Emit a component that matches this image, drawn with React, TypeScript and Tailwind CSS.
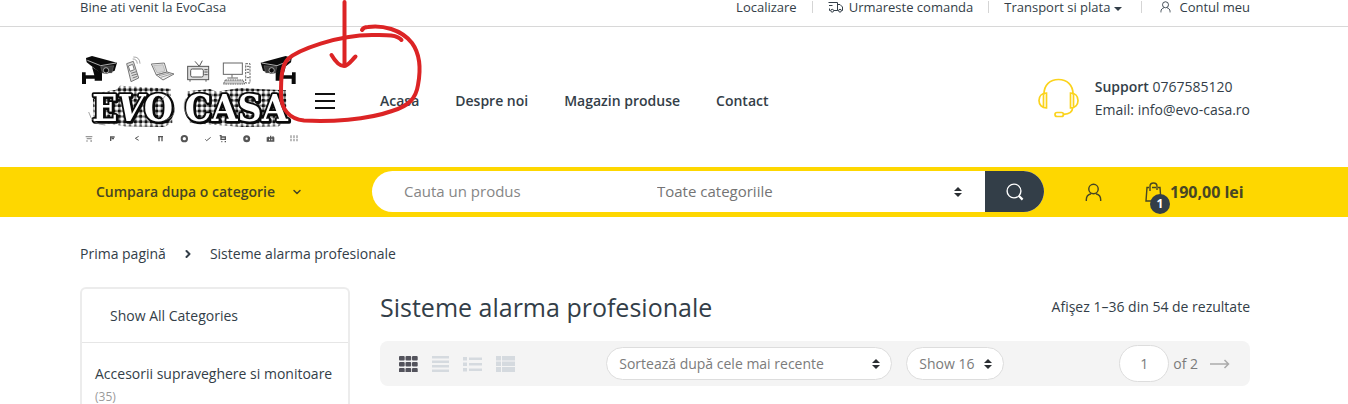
import type { ReactNode } from 'react'
import { ChevronDown, ChevronRight } from 'lucide-react'

type IconProps = {
  className?: string;
};

type PillSelectProps = {
  label: string;
  value: string;
  className: string;
};

const navLinks = ['Acasa', 'Despre noi', 'Magazin produse', 'Contact']

function Container({ children }: { children: ReactNode }) {
  return (
    <div className="pr-[18px]">
      <div className="mx-auto w-full max-w-[1170px]">{children}</div>
    </div>
  )
}

function UserIcon({ className }: IconProps) {
  return (
    <svg viewBox="0 0 18 20" fill="none" stroke="currentColor" strokeWidth="1.500" className={className} aria-hidden="true">
      <circle cx="9" cy="6.300" r="5" />
      <path d="M1.400 19v-1.500c0-3.500 2.300-5.500 5-6.200M16.600 19v-1.500c0-3.500-2.300-5.500-5-6.200" />
    </svg>
  )
}

function TruckIcon({ className }: IconProps) {
  return (
    <svg viewBox="0 0 15 12" fill="none" stroke="currentColor" strokeWidth="1" className={className} aria-hidden="true">
      <path d="M.5 1.500H9.500V9.500H6M2.500 9.500H1.500V7.500M1 4.500H4.500M9.500 3.500H12L14.500 6V9.500H13.500M10.500 9.500H9.500" />
      <circle cx="4.200" cy="9.700" r="1.400" />
      <circle cx="12" cy="9.700" r="1.400" />
    </svg>
  )
}

function SortCaret({ className }: IconProps) {
  return (
    <svg viewBox="0 0 8 10" fill="#2b2f33" className={className} aria-hidden="true">
      <path d="M4 0L8 4H0zM4 10L0 6H8z" />
    </svg>
  )
}

function HeadsetIcon({ className }: IconProps) {
  return (
    <svg viewBox="0 0 41 40" fill="none" stroke="#fbd31c" strokeWidth="1.700" strokeLinecap="round" className={className} aria-hidden="true">
      <path d="M6 16C6 7 12 1.500 20.500 1.500S35 7 35 16" />
      <path d="M8.500 15v15C4 30 1 27 1 22.500S4 15 8.500 15zM5.500 17v11" />
      <path d="M32.500 15v15c4.500 0 7.500-3 7.500-7.500S37 15 32.500 15zM35.500 17v11" />
      <path d="M34.500 30c0 4-3 6-9 6.300" />
      <rect x="17" y="34.500" width="8.500" height="4" rx="2" />
    </svg>
  )
}

function CctvCamera() {
  return (
    <g>
      <path d="M48 53L66 47L141 67L134 91L110 100L90 97L50 66z" fill="#0a0a0a" />
      <path d="M52 60L92 76L138 68" fill="none" stroke="#fff" strokeWidth="2" />
      <path d="M92 79L131 76L126 98L97 98z" fill="#3a3a3a" stroke="#999" strokeWidth="1" />
      <circle cx="108" cy="90" r="8" fill="#0a0a0a" stroke="#e5e5e5" strokeWidth="2" />
      <path d="M66 80L96 99V121H74V115H48V131H36V96H47V105H73z" fill="#0a0a0a" />
    </g>
  )
}

function Logo() {
  return (
    <svg viewBox="30 26 660 285" className="h-[95px] w-[220px] shrink-0" role="img" aria-label="Evo Casa">
      <defs>
        <pattern id="plaid" width="16" height="16" patternUnits="userSpaceOnUse">
          <rect width="16" height="16" fill="#fff" />
          <path d="M0 4H16M4 0V16" stroke="#777" strokeWidth="6" />
          <rect x="0" y="0" width="8" height="8" fill="#111" />
        </pattern>
      </defs>

      <CctvCamera />
      <g transform="translate(713 0) scale(-1 1)">
        <CctvCamera />
      </g>

      {/* phone */}
      <g fill="#ddd" stroke="#777" strokeWidth="3">
        <path d="M170 70L190 63L206 113L183 124z" />
        <path d="M175 77L188 72L193 88L180 93z" fill="#fff" />
        <path d="M183 99L199 94M185 106L201 101M188 113L202 108" />
        <path d="M188 56q12-1 14 14M190 50q19-1 20 20" fill="none" strokeWidth="2" />
      </g>

      {/* laptop */}
      <g fill="#eee" stroke="#777" strokeWidth="3">
        <path d="M244 71L283 68L291 95L259 104z" />
        <path d="M250 76L279 73L285 92L262 98z" fill="#d5d5d5" strokeWidth="1" />
        <path d="M259 104L291 95L312 101L279 119z" />
        <path d="M267 106L298 98M272 111L305 101" strokeWidth="2" />
      </g>

      {/* television */}
      <g fill="#ddd" stroke="#555" strokeWidth="3">
        <path d="M375 63L388 78L397 61" fill="none" />
        <rect x="353" y="78" width="63" height="40" />
        <rect x="362" y="86" width="38" height="24" rx="5" fill="#fff" />
        <path d="M403 88h10M403 95h10M403 103h10M360 119v5M408 119v5" />
      </g>

      {/* desktop computer */}
      <g fill="#fff" stroke="#666" strokeWidth="3">
        <rect x="460" y="68" width="57" height="34" />
        <path d="M486 102v10M472 113h32" />
        <rect x="527" y="70" width="13" height="58" strokeDasharray="7 3" />
        <path d="M530 78h8M530 87h8M530 96h8M530 112h8" />
        <path d="M466 119H519L524 131H460z" fill="#ccc" strokeDasharray="5 2" />
      </g>

      <path d="M68 160L138 148L150 136L302 145L307 247L282 260L164 258L72 243z" fill="url(#plaid)" />
      <path d="M352 153L420 146L440 154L508 143L648 150L650 242L626 258L520 260L360 248z" fill="url(#plaid)" />
      <g
        fontFamily="'DejaVu Serif Condensed', 'DejaVu Serif', serif"
        fontWeight="700"
        fontSize="112"
        fill="#fff"
        stroke="#0a0a0a"
        strokeWidth="11"
        strokeLinejoin="round"
        paintOrder="stroke"
        className="drop-shadow-[3px_3px_0_#0a0a0a]"
      >
        <text x="66" y="241">E<tspan fontStyle="italic">V</tspan>O</text>
        <text x="344" y="241">CASA</text>
      </g>
      <path d="M56 215q10 38 50 39M294 155l-22 30M285 239q35-10 27-38M347 175q-12 30 8 55" fill="none" stroke="#777" strokeWidth="2" />

      {/* row of small tools */}
      <g fill="none" stroke="#555" strokeWidth="4">
        <path d="M47 289h20M50 295h15M49 302h4M61 302h5" stroke="#999" />
        <path d="M120 290h14M122 290v12M125 295h7" />
        <path d="M206 288L196 294L206 300" strokeWidth="3" />
        <path d="M264 289h15M267 289v14M276 289v14" />
        <circle cx="343" cy="295" r="8" strokeWidth="6" />
        <path d="M406 297l4 4L422 291" strokeWidth="3" />
        <path d="M449 286h4v11h13v-7h-12M454 304h3M464 304h4" />
        <circle cx="530" cy="295" r="7" strokeWidth="7" />
        <path d="M592 293h19v9h-19zM595 289v12M602 286v14M609 288v12" />
        <path d="M663 285v20M672 285v20M681 285v20" stroke="#999" strokeDasharray="8 2" />
      </g>
    </svg>
  )
}

function PillSelect({ label, value, className }: PillSelectProps) {
  return (
    <div className={`relative ${className}`}>
      <select
        aria-label={label}
        className="h-[33px] w-full appearance-none rounded-full border border-[#dddddd] bg-white pl-3 text-sm text-[#7b7b7b]"
      >
        <option>{value}</option>
      </select>
      <SortCaret className="pointer-events-none absolute top-3 right-3 h-[10px] w-2" />
    </div>
  )
}

function TopBar() {
  return (
    <div className="border-b border-[#d8d8d8] pb-3 text-[13px] leading-[14px]">
      <Container>
        <div className="flex items-center justify-between">
          <span>Bine ati venit la EvoCasa</span>
          <nav className="flex items-center">
            <a href="#localizare">Localizare</a>
            <span className="mx-[15px] h-3 w-px bg-[#d5d5d5]" />
            <a href="#comanda" className="flex items-center gap-[6px]">
              <TruckIcon className="h-3 w-[15px]" />
              Urmareste comanda
            </a>
            <span className="mx-[15px] h-3 w-px bg-[#d5d5d5]" />
            <a href="#transport" className="flex items-center gap-1">
              Transport si plata
              <svg viewBox="0 0 8 4" fill="currentColor" className="mt-1 h-1 w-2" aria-hidden="true">
                <path d="M0 0H8L4 4z" />
              </svg>
            </a>
            <span className="mr-[18px] ml-[19px] h-3 w-px bg-[#d5d5d5]" />
            <a href="#cont" className="flex items-center gap-2">
              <UserIcon className="h-3 w-[11px]" />
              Contul meu
            </a>
          </nav>
        </div>
      </Container>
    </div>
  )
}

function Header() {
  return (
    <header className="pt-[22px] pb-[23px]">
      <Container>
        <div className="flex items-center">
          <Logo />
          <button type="button" aria-label="Meniu" className="mt-2 ml-[15px] flex w-5 flex-col gap-[5px]">
            <span className="h-[2px] w-full bg-[#111111]" />
            <span className="h-[2px] w-full bg-[#111111]" />
            <span className="h-[2px] w-full bg-[#111111]" />
          </button>
          <nav className="mt-2 ml-[45px] flex gap-9 text-sm font-semibold">
            {navLinks.map((link) => (
              <a key={link} href="#nav">{link}</a>
            ))}
          </nav>
          <div className="mt-[2px] ml-auto flex items-center gap-4">
            <HeadsetIcon className="h-10 w-[41px]" />
            <div className="text-sm leading-[23px]">
              <p><strong className="font-semibold">Support</strong> 0767585120</p>
              <p>Email: info@evo-casa.ro</p>
            </div>
          </div>
        </div>
      </Container>
    </header>
  )
}

function SearchBar() {
  return (
    <div className="bg-[#fed700] py-1 text-[#474624]">
      <Container>
        <div className="flex h-[42px] items-center">
          <button type="button" className="ml-4 flex w-[276px] items-center gap-4 text-sm font-semibold">
            Cumpara dupa o categorie
            <ChevronDown className="h-3 w-3" strokeWidth={3} />
          </button>
          <form className="flex h-[41px] flex-1 self-start overflow-hidden rounded-full bg-white text-[15px] text-[#747474]">
            <input
              type="text"
              aria-label="Cauta un produs"
              placeholder="Cauta un produs"
              className="w-[285px] pl-8 placeholder:text-[#868686]"
            />
            <div className="relative flex-1">
              <select aria-label="Categorie" className="h-full w-full appearance-none bg-white">
                <option>Toate categoriile</option>
              </select>
              <SortCaret className="pointer-events-none absolute top-4 right-[23px] h-[10px] w-2" />
            </div>
            <button type="button" aria-label="Cauta" className="flex w-[59px] items-center justify-center bg-[#333e48] text-white">
              <svg viewBox="0 0 18 18" fill="none" stroke="currentColor" className="h-[18px] w-[18px]" aria-hidden="true">
                <circle cx="8" cy="8" r="6.900" strokeWidth="1.400" />
                <path d="M12.800 12.800L16.600 16.600" strokeWidth="2.200" />
              </svg>
            </button>
          </form>
          <div className="flex w-[206px] items-center">
            <button type="button" aria-label="Contul meu" className="ml-[41px]">
              <UserIcon className="h-[19px] w-[17px]" />
            </button>
            <a href="#cos" className="relative ml-[43px] flex items-center gap-2 text-base font-bold">
              <svg viewBox="0 0 17 20" fill="none" stroke="currentColor" strokeWidth="1.400" className="h-5 w-[17px]" aria-hidden="true">
                <path d="M4 5.500H2L1 19H16L15 5.500H13M7 5.500H11M5 9V4.500C5 2 6.500 1 8.500 1S12 2 12 4.500V8" />
              </svg>
              190,00 lei
              <span className="absolute top-[14px] left-[5px] flex h-5 w-5 items-center justify-center rounded-full bg-[#333e48] text-xs text-white">
                1
              </span>
            </a>
          </div>
        </div>
      </Container>
    </div>
  )
}

function Sidebar() {
  return (
    <aside className="w-[270px] shrink-0 rounded-t-md border-2 border-b-0 border-[#ececec]">
      <a href="#categorii" className="block border-b border-[#e6e6e6] py-4 pl-7 text-sm leading-[21px]">
        Show All Categories
      </a>
      <div className="px-[13px] pt-5 text-sm leading-[22px]">
        <a href="#accesorii">Accesorii supraveghere si monitoare</a>
        <p className="pt-1 text-xs leading-4 text-[#9a9a9a]">(35)</p>
      </div>
    </aside>
  )
}

function ViewSwitcher() {
  return (
    <div className="flex items-center gap-[14px] text-[#d5dadf]">
      <button type="button" aria-label="Grid" className="text-[#53535c]">
        <svg viewBox="0 0 19 16" fill="currentColor" className="h-4 w-[19px]" aria-hidden="true">
          {[0, 6, 12].map((y) => [0, 6.5, 13].map((x) => (
            <rect key={`${x}-${y}`} x={x} y={y} width="5.700" height="4.500" rx="1" />
          )))}
        </svg>
      </button>
      <button type="button" aria-label="Grid extins">
        <svg viewBox="0 0 17 16" fill="currentColor" className="h-4 w-[17px]" aria-hidden="true">
          <path d="M0 0H17V2.500H0zM0 4.500H17V7H0zM0 9H17V11.500H0zM0 13.500H17V16H0z" />
        </svg>
      </button>
      <button type="button" aria-label="Lista">
        <svg viewBox="0 0 19 16" fill="currentColor" className="h-4 w-[19px]" aria-hidden="true">
          <path d="M0 1H4V4.500H0zM6 1.500H19V4H6zM0 6.500H4V10H0zM6 7H19V9.500H6zM0 12H4V15.500H0zM6 12.500H19V15H6z" />
        </svg>
      </button>
      <button type="button" aria-label="Lista compacta">
        <svg viewBox="0 0 19 16" fill="currentColor" className="h-4 w-[19px]" aria-hidden="true">
          <path d="M0 0H5V4.500H0zM6 0H19V4.500H6zM0 5.500H5V10H0zM6 5.500H19V10H6zM0 11H5V16H0zM6 11H19V16H6z" />
        </svg>
      </button>
    </div>
  )
}

function Toolbar() {
  return (
    <div className="mt-[17px] flex h-[45px] items-center rounded-lg bg-[#f4f4f4] pr-5 pl-[19px] text-sm text-[#7b7b7b]">
      <ViewSwitcher />
      <div className="ml-auto flex gap-[14px]">
        <PillSelect label="Sortare" value="Sortează după cele mai recente" className="w-[286px]" />
        <PillSelect label="Produse pe pagina" value="Show 16" className="w-[98px]" />
      </div>
      <div className="ml-[115px] flex items-center">
        <input
          type="text"
          aria-label="Pagina"
          defaultValue="1"
          className="h-[37px] w-[50px] rounded-full border border-[#dddddd] bg-white text-center"
        />
        <span className="ml-1">of 2</span>
        <a href="#pagina-2" aria-label="Pagina urmatoare" className="ml-3">
          <svg viewBox="0 0 20 10" fill="none" stroke="#aaaaaa" strokeWidth="1.500" className="h-[10px] w-5" aria-hidden="true">
            <path d="M0 5H18.500M14.500 1L18.500 5L14.500 9" />
          </svg>
        </a>
      </div>
    </div>
  )
}

// Hand-drawn marker that circles the menu button
function MenuMarker() {
  return (
    <svg
      viewBox="270 0 170 130"
      fill="none"
      stroke="#dc2425"
      strokeWidth="4"
      strokeLinecap="round"
      strokeLinejoin="round"
      className="pointer-events-none absolute top-0 left-[270px] h-[130px] w-[170px]"
      aria-hidden="true"
    >
      <path d="M344.500 2V64M331.500 55C335 61 340 66 344 66S351 61 355.500 56.500" />
      <path d="M401.500 40C397 34 383 35 372 35C337 35 298 50 288 59C281 66 281 80 281 94C281 109 289 119 304 120.500C329 122 367 120 392 111C409 106 416 98 418 85C421 69 420 54 412 43C401 29 382 25 368 27C365 27 363 28 362 30" />
    </svg>
  )
}

export default function App() {
  return (
    <div className="relative bg-white font-['Open_Sans','Noto_Sans',sans-serif] text-[#333e48]">
      <TopBar />
      <Header />
      <SearchBar />
      <Container>
        <nav className="flex items-center pt-[26px] text-sm leading-[22px]">
          <a href="#acasa">Prima pagină</a>
          <ChevronRight className="mx-4 h-3 w-3" strokeWidth={4} />
          <span>Sisteme alarma profesionale</span>
        </nav>
        <div className="mt-[22px] flex gap-[30px]">
          <Sidebar />
          <main className="min-w-0 flex-1">
            <div className="flex items-center justify-between pt-[3px]">
              <h1 className="text-[25px] leading-[34px]">Sisteme alarma profesionale</h1>
              <p className="text-sm">Afişez 1–36 din 54 de rezultate</p>
            </div>
            <Toolbar />
          </main>
        </div>
      </Container>
      <MenuMarker />
    </div>
  )
}
